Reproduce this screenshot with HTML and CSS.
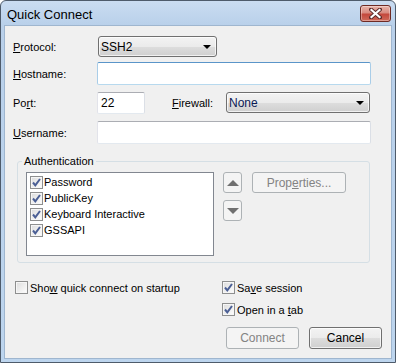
FILE: index.html
```html
<!DOCTYPE html>
<html lang="en">
<head>
  <meta charset="UTF-8">
  <title>Quick Connect</title>
  <link rel="stylesheet" href="styles.css">
</head>
<body>
  <div class="window">
    <div class="titlebar">
      <span class="title">Quick Connect</span>
      <button class="close">
        <svg width="13" height="11" viewBox="0 0 13 11">
          <path d="M2 1.5 L11 9.5 M11 1.5 L2 9.5" stroke="#5a2a2a" stroke-width="4" stroke-linecap="round"/>
          <path d="M2.5 2 L10.5 9 M10.5 2 L2.5 9" stroke="#fff" stroke-width="2.2" stroke-linecap="square"/>
        </svg>
      </button>
    </div>

    <div class="client">
      <div class="row row-protocol">
        <label class="lbl"><u>P</u>rotocol:</label>
        <div class="combo combo-protocol"><span>SSH2</span><i class="arrow"></i></div>
      </div>
      <div class="row row-host">
        <label class="lbl"><u>H</u>ostname:</label>
        <div class="field field-wide focused"></div>
      </div>
      <div class="row row-port">
        <label class="lbl">Po<u>r</u>t:</label>
        <div class="field field-port">22</div>
        <label class="lbl-firewall"><u>F</u>irewall:</label>
        <div class="combo combo-firewall"><span>None</span><i class="arrow"></i></div>
      </div>
      <div class="row row-user">
        <label class="lbl"><u>U</u>sername:</label>
        <div class="field field-wide"></div>
      </div>

      <fieldset class="auth">
        <legend>Authentication</legend>
        <div class="listbox">
          <div class="item"><span class="check"><svg width="11" height="11" viewBox="0 0 11 11"><path d="M2 5.5 L4.3 8.3 L9 2" fill="none" stroke="#4b5f95" stroke-width="2"/></svg></span><span>Password</span></div>
          <div class="item"><span class="check"><svg width="11" height="11" viewBox="0 0 11 11"><path d="M2 5.5 L4.3 8.3 L9 2" fill="none" stroke="#4b5f95" stroke-width="2"/></svg></span><span>PublicKey</span></div>
          <div class="item"><span class="check"><svg width="11" height="11" viewBox="0 0 11 11"><path d="M2 5.5 L4.3 8.3 L9 2" fill="none" stroke="#4b5f95" stroke-width="2"/></svg></span><span>Keyboard Interactive</span></div>
          <div class="item"><span class="check"><svg width="11" height="11" viewBox="0 0 11 11"><path d="M2 5.5 L4.3 8.3 L9 2" fill="none" stroke="#4b5f95" stroke-width="2"/></svg></span><span>GSSAPI</span></div>
        </div>
        <div class="movers">
          <button class="mini"><i class="tri-up"></i></button>
          <button class="mini"><i class="tri-down"></i></button>
        </div>
        <button class="btn btn-props" disabled>Prop<u>e</u>rties...</button>
      </fieldset>

      <div class="options">
        <div class="opt opt-show"><span class="check"></span><span>Sho<u>w</u> quick connect on startup</span></div>
        <div class="opt-right">
          <div class="opt"><span class="check"><svg width="11" height="11" viewBox="0 0 11 11"><path d="M2 5.5 L4.3 8.3 L9 2" fill="none" stroke="#4b5f95" stroke-width="2"/></svg></span><span>Sa<u>v</u>e session</span></div>
          <div class="opt"><span class="check"><svg width="11" height="11" viewBox="0 0 11 11"><path d="M2 5.5 L4.3 8.3 L9 2" fill="none" stroke="#4b5f95" stroke-width="2"/></svg></span><span>Open in a <u>t</u>ab</span></div>
        </div>
      </div>

      <div class="buttons">
        <button class="btn" disabled>Connect</button>
        <button class="btn btn-cancel">Cancel</button>
      </div>
    </div>
  </div>
</body>
</html>
```

FILE: styles.css
```css
* {
  box-sizing: border-box;
}

body {
  margin: 0;
  font-family: "Liberation Sans", Arial, sans-serif;
  font-size: 11px;
  color: #000;
  background: #fff;
}

.window {
  width: 396px;
  height: 363px;
  border: 1px solid #4e5b6b;
  border-radius: 6px 6px 0 0;
  background: linear-gradient(#cadcf1, #b9d0ea 24px, #bdd5ee);
  padding: 0 3px 3px;
  display: flex;
  flex-direction: column;
}

.titlebar {
  height: 24px;
  display: flex;
  align-items: flex-start;
  justify-content: space-between;
  padding-left: 3px;
}

.title {
  font-size: 13px;
  line-height: 15px;
  margin-top: 6px;
  color: #000;
}

.close {
  width: 31px;
  height: 17px;
  margin: 4px 1px 0 0;
  padding: 0;
  border: 1px solid #6e2a24;
  border-radius: 3px;
  background: linear-gradient(#e8b4aa, #d98b80 45%, #c4483c 55%, #cf6a5a);
  box-shadow: inset 0 0 0 1px rgba(255, 255, 255, 0.35);
  display: flex;
  align-items: center;
  justify-content: center;
}

.client {
  flex: 1;
  background: #f0f0f0;
  border: 1px solid #9fb6cf;
  padding: 10px 0 0 8px;
}

/* top form rows */
.row {
  display: flex;
  align-items: center;
}

.row-protocol { height: 21px; margin-bottom: 5px; }
.row-host { height: 23px; margin-bottom: 6px; }
.row-port { height: 23px; margin-bottom: 7px; }
.row-user { height: 23px; }

.lbl {
  width: 84px;
}

.lbl-firewall {
  width: 54px;
  margin-left: 27px;
}

.combo {
  height: 21px;
  display: flex;
  align-items: center;
  justify-content: space-between;
  border: 1px solid #707070;
  border-radius: 3px;
  background: linear-gradient(#f3f3f3 0, #ebebeb 50%, #dddddd 51%, #cfcfcf 100%);
  box-shadow: inset 0 0 0 1px rgba(255, 255, 255, 0.7);
  padding: 0 5px 0 2px;
  font-size: 12px;
}

.combo-protocol {
  width: 119px;
  margin-left: 1px;
}

.combo-firewall {
  width: 144px;
  color: #0a1a55;
}

.arrow {
  width: 0;
  height: 0;
  border-left: 4px solid transparent;
  border-right: 4px solid transparent;
  border-top: 4px solid #000;
}

.field {
  height: 23px;
  background: #fff;
  border: 1px solid;
  border-color: #abadb3 #dbdfe6 #e3e9ef #e2e3ea;
  border-radius: 2px;
  padding: 0 3px;
  display: flex;
  align-items: center;
  font-size: 12px;
}

.field.focused {
  border-color: #5a95c9 #a9cde8 #b7d9ee #a9cde8;
}

.field-wide {
  width: 274px;
}

.field-port {
  width: 48px;
  height: 22px;
}

/* authentication group */
.auth {
  margin: 11px 21px 0 4px;
  padding: 4px 6px 6px 8px;
  border: 1px solid #d5dfe5;
  border-radius: 3px;
  display: flex;
  align-items: flex-start;
}

.auth legend {
  padding: 0 2px;
  margin-left: -4px;
  line-height: 13px;
}

.listbox {
  width: 188px;
  height: 84px;
  background: #fff;
  border: 1px solid #828790;
  padding: 1px 3px;
}

.item {
  height: 16px;
  display: flex;
  align-items: center;
}

.check {
  width: 13px;
  height: 13px;
  flex: none;
  border: 1px solid #8e8f8f;
  background: linear-gradient(135deg, #dcdcdc, #f4f4f4 70%, #fff);
  box-shadow: inset 0 0 0 1px #f6f6f6;
  margin-right: 1px;
  display: flex;
  align-items: center;
  justify-content: center;
}

.movers {
  display: flex;
  flex-direction: column;
  gap: 7px;
  margin-left: 9px;
}

.mini {
  width: 19px;
  height: 21px;
  padding: 0;
  border: 1px solid #adb2b5;
  border-radius: 3px;
  background: #f4f4f4;
  display: flex;
  align-items: center;
  justify-content: center;
}

.tri-up {
  border-left: 6px solid transparent;
  border-right: 6px solid transparent;
  border-bottom: 6px solid #707070;
}

.tri-down {
  border-left: 6px solid transparent;
  border-right: 6px solid transparent;
  border-top: 6px solid #707070;
}

.btn {
  height: 22px;
  padding: 0;
  font-family: inherit;
  font-size: 12px;
  color: #000;
  border: 1px solid #707070;
  border-radius: 3px;
  background: linear-gradient(#f3f3f3 0, #ebebeb 50%, #dddddd 51%, #cfcfcf 100%);
  box-shadow: inset 0 0 0 1px rgba(255, 255, 255, 0.7);
}

.btn:disabled {
  color: #838383;
  border-color: #adb2b5;
  background: #f4f4f4;
  box-shadow: none;
}

.btn-props {
  width: 94px;
  height: 21px;
  margin-left: 10px;
}

/* bottom options */
.options {
  display: flex;
  margin-top: 18px;
  padding-left: 2px;
}

.opt {
  height: 13px;
  display: flex;
  align-items: center;
  white-space: nowrap;
}

.opt .check {
  margin-right: 2px;
}

.opt-show {
  width: 207px;
}

.opt-right {
  display: flex;
  flex-direction: column;
  gap: 9px;
}

.buttons {
  display: flex;
  justify-content: flex-end;
  gap: 10px;
  margin: 11px 9px 0 0;
}

.buttons .btn {
  width: 73px;
}
```
